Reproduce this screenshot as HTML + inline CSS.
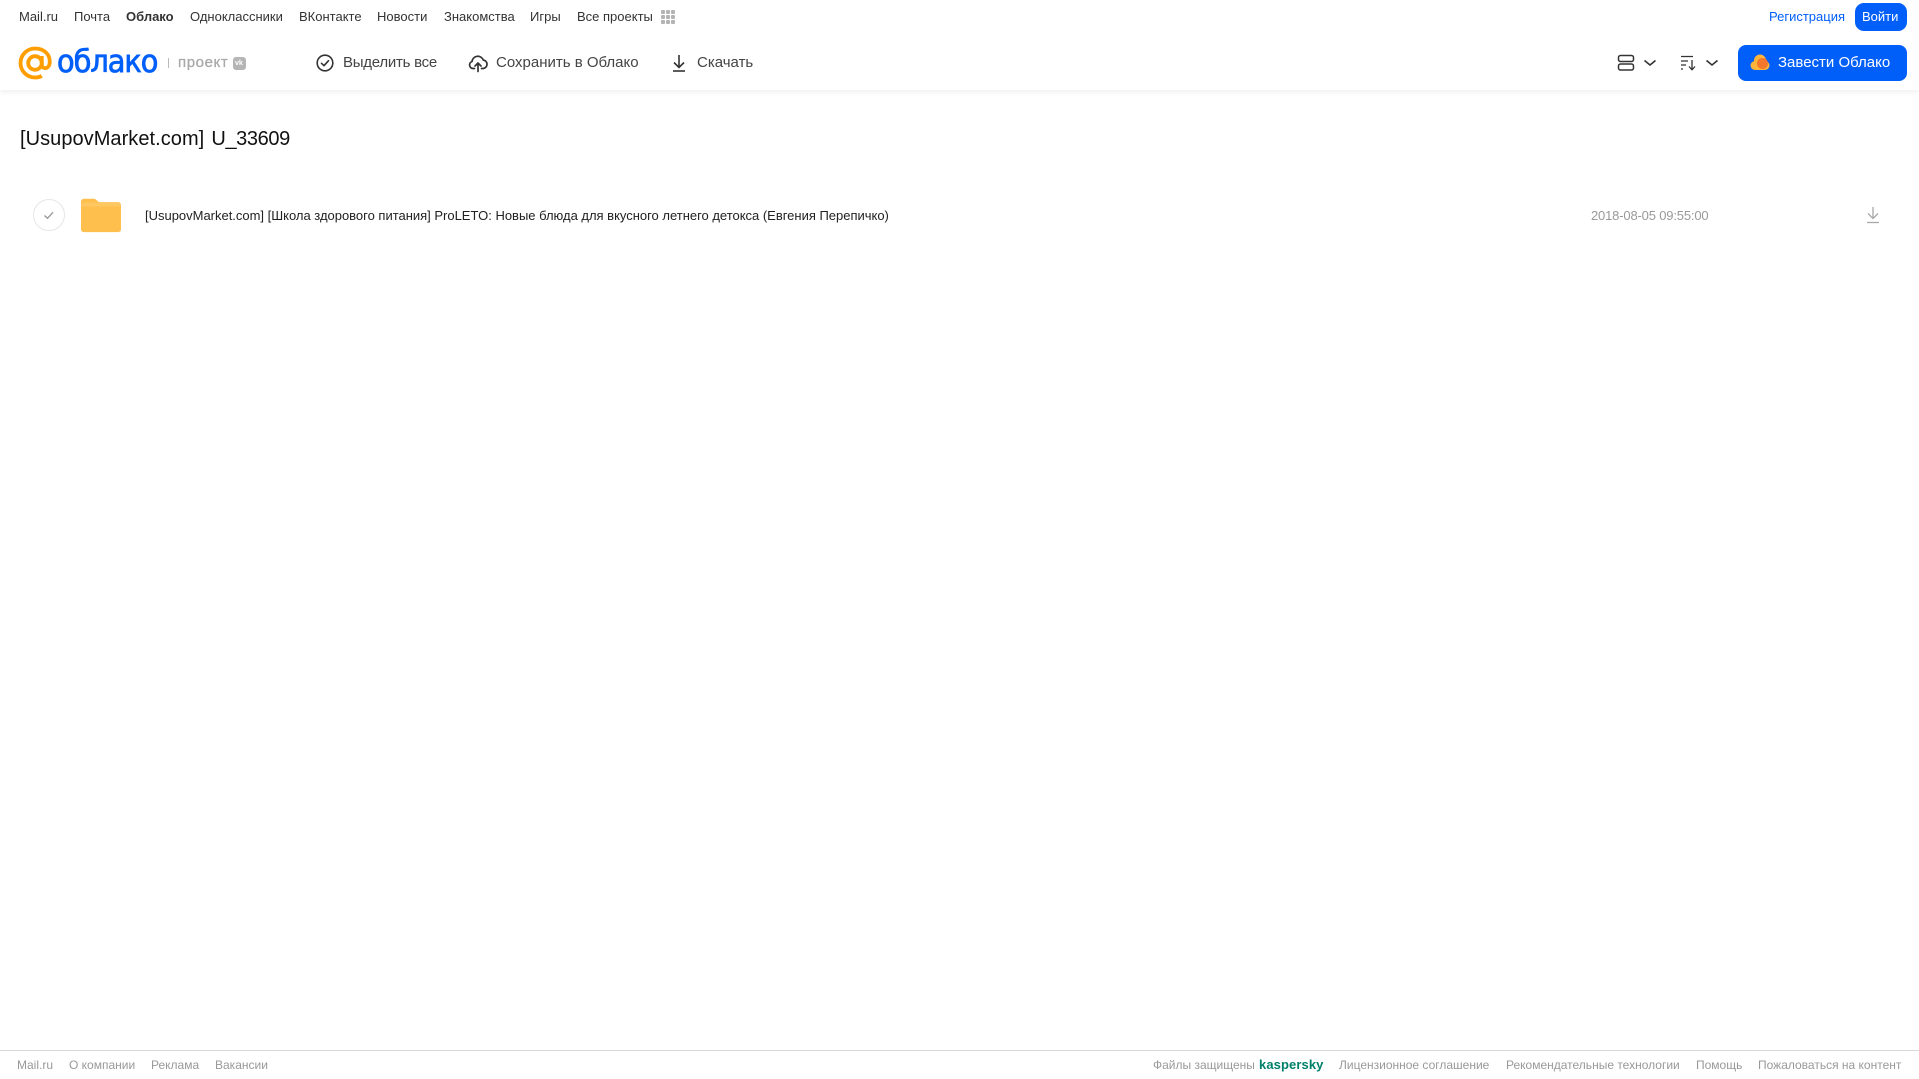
<!DOCTYPE html>
<html lang="ru">
<head>
<meta charset="utf-8">
<title>Облако</title>
<style>
html,body{margin:0;padding:0;background:#fff}
body{width:1919px;height:1079px;position:relative;overflow:hidden;font-family:"Liberation Sans","Noto Sans CJK SC",sans-serif;color:#333}
.t{position:absolute;white-space:nowrap;line-height:20px}
.n{top:7px;font-size:13px;color:#333}
.a{top:53px;font-size:15px;color:#444}
.f{top:1055px;font-size:12px;color:#999}
svg{position:absolute;display:block}
#hdr{position:absolute;left:0;top:0;width:1919px;height:90px;background:#fff;box-shadow:0 2px 6px rgba(0,0,0,.07)}
.btn{position:absolute;background:#005ff9;border-radius:7px}
</style>
</head>
<body>
<div id="hdr"></div>

<span class="t n" style="left:19px">Mail.ru</span>
<span class="t n" style="left:74px">Почта</span>
<span class="t n" style="left:126px;font-weight:bold">Облако</span>
<span class="t n" style="left:190px">Одноклассники</span>
<span class="t n" style="left:299px">ВКонтакте</span>
<span class="t n" style="left:377px">Новости</span>
<span class="t n" style="left:444px">Знакомства</span>
<span class="t n" style="left:530px">Игры</span>
<span class="t n" style="left:577px">Все проекты</span>
<svg style="left:660px;top:9px" width="16" height="16" fill="#b4b4b4"><rect x="1" y="1" width="4" height="4" rx="1"/><rect x="6" y="1" width="4" height="4" rx="1"/><rect x="11" y="1" width="4" height="4" rx="1"/><rect x="1" y="6" width="4" height="4" rx="1"/><rect x="6" y="6" width="4" height="4" rx="1"/><rect x="11" y="6" width="4" height="4" rx="1"/><rect x="1" y="11" width="4" height="4" rx="1"/><rect x="6" y="11" width="4" height="4" rx="1"/><rect x="11" y="11" width="4" height="4" rx="1"/></svg>

<span class="t n" style="left:1769px;color:#005ff9">Регистрация</span>
<div class="btn" style="left:1855px;top:3px;width:52px;height:28px;border-radius:9px"></div>
<span class="t n" style="left:1862px;color:#fff">Войти</span>

<!-- logo -->
<svg style="left:18px;top:46px" width="34" height="34" viewBox="0 0 34 34" fill="none" stroke="#ff9e00" stroke-width="3.800"><circle cx="17" cy="17" r="6.800"/><path d="M23.800 10v8.500c0 5 6.700 5 7.700-.5C33 9 26.500 2.500 17 2.500 9 2.500 2.500 9 2.500 17S9 31.500 17 31.500c2.800 0 4.800-.5 6.800-1.500"/></svg>
<span class="t" style="left:57px;top:45px;font-size:31px;line-height:34px;color:#005ff9;font-family:'DejaVu Sans',sans-serif;letter-spacing:-1.100px;-webkit-text-stroke:.8px #005ff9;transform:scaleX(.93);transform-origin:left center">облако</span>
<div style="position:absolute;left:168px;top:58px;width:1px;height:10px;background:#bbb"></div>
<span class="t" style="left:178px;top:53px;font-size:15px;color:#a9a9a9;letter-spacing:.6px;-webkit-text-stroke:.3px #a9a9a9">проект</span>
<div style="position:absolute;left:233px;top:57px;width:13px;height:13px;background:#b5b5b5;border-radius:3px"></div>
<span class="t" style="left:235px;top:58px;font-size:7px;line-height:11px;font-weight:bold;color:#fff">vk</span>

<!-- actions -->
<svg style="left:315px;top:53px" width="20" height="20" viewBox="0 0 20 20" fill="none" stroke="#333" stroke-width="1.600"><circle cx="10" cy="10" r="7.800"/><path d="M6.500 10.300l2.500 2.400 4.500-5" stroke-linecap="round" stroke-linejoin="round"/></svg>
<span class="t a" style="left:343px;letter-spacing:-.25px">Выделить все</span>
<svg style="left:468px;top:53px" width="20" height="20" viewBox="0 0 20 20" fill="none" stroke="#333" stroke-width="1.700" stroke-linecap="round" stroke-linejoin="round"><path d="M6.500 15.500H5a3.600 3.600 0 0 1-1-7A5.800 5.800 0 0 1 15.200 7a4.300 4.300 0 0 1 .3 8.500h-2"/><path d="M10 18.500v-8M7 13l3-3 3 3"/></svg>
<span class="t a" style="left:496px">Сохранить в Облако</span>
<svg style="left:669px;top:53px" width="20" height="20" viewBox="0 0 20 20" fill="none" stroke="#333" stroke-width="1.600"><path d="M10 2v12M5 9.500l5 5 5-5"/><path d="M4 18h12"/></svg>
<span class="t a" style="left:697px">Скачать</span>

<!-- right controls -->
<svg style="left:1617px;top:54px" width="18" height="18" viewBox="0 0 18 18" fill="none" stroke="#333" stroke-width="1.500"><rect x="1.500" y="1.500" width="15" height="6" rx="2"/><rect x="1.500" y="10" width="15" height="6" rx="2"/></svg>
<svg style="left:1643px;top:58px" width="14" height="10" viewBox="0 0 14 10" fill="none" stroke="#333" stroke-width="1.600"><path d="M1.500 2.500L7 7l5.500-4.500"/></svg>
<svg style="left:1680px;top:54px" width="18" height="18" viewBox="0 0 18 18" fill="none" stroke="#333" stroke-width="1.300"><path d="M1 2.500h12M1 7h7M1 11h5M1 15h2"/><path d="M12 6v10M9 12.500l3 3.300 3-3.300"/></svg>
<svg style="left:1705px;top:58px" width="14" height="10" viewBox="0 0 14 10" fill="none" stroke="#333" stroke-width="1.600"><path d="M1.500 2.500L7 7l5.500-4.500"/></svg>

<div class="btn" style="left:1738px;top:45px;width:169px;height:36px;border-radius:8px"></div>
<svg style="left:1750px;top:54px" width="20" height="18" viewBox="0 0 20 18"><g fill="#ffb43a"><circle cx="5" cy="11.500" r="4.500"/><circle cx="10" cy="6.500" r="6"/><circle cx="15" cy="11.500" r="4.500"/><rect x="5" y="10" width="10" height="6"/></g><circle cx="12.500" cy="9.500" r="5.500" fill="#f5772c"/></svg>
<span class="t a" style="left:1778px;color:#fff">Завести Облако</span>

<!-- title -->
<span class="t" style="left:20px;top:127px;font-size:20px;line-height:24px;color:#111;letter-spacing:.05px;word-spacing:1.500px">[UsupovMarket.com] <span style="letter-spacing:-.4px">U_33609</span></span>

<!-- row -->
<svg style="left:32px;top:198px" width="34" height="34" viewBox="0 0 34 34" fill="none"><circle cx="17" cy="17" r="15.500" stroke="#e6e6e6"/><path d="M12.500 17.500l3 2.800 5.500-6" stroke="#999" stroke-width="1.400"/></svg>
<svg style="left:81px;top:197px" width="40" height="36" viewBox="0 0 42 36"><path fill="#ffbf4d" d="M3 1h10c2 0 3 1 4 2l2 1.500h20a3 3 0 0 1 3 3V33a3 3 0 0 1-3 3H3a3 3 0 0 1-3-3V4a3 3 0 0 1 3-3z"/><path fill="#ffcb6b" d="M0 8a3 3 0 0 1 3-3h36a3 3 0 0 1 3 3v1H0z" opacity=".7"/></svg>
<span class="t" style="left:145px;top:206px;font-size:13px;color:#222;letter-spacing:-.01px">[UsupovMarket.com] [Школа здорового питания] ProLETO: Новые блюда для вкусного летнего детокса (Евгения Перепичко)</span>
<span class="t" style="left:1591px;top:206px;font-size:13px;color:#999;letter-spacing:-.17px">2018-08-05 09:55:00</span>
<svg style="left:1864px;top:206px" width="18" height="18" viewBox="0 0 18 18" fill="none" stroke="#a8a8a8" stroke-width="1.300"><path d="M9 1v11M4 7.500l5 5 5-5"/><path d="M3 16.500h12"/></svg>

<!-- footer -->
<div style="position:absolute;left:0;top:1050px;width:1919px;height:1px;background:#d9d9d9"></div>
<span class="t f" style="left:17px">Mail.ru</span>
<span class="t f" style="left:69px">О компании</span>
<span class="t f" style="left:151px">Реклама</span>
<span class="t f" style="left:215px">Вакансии</span>
<span class="t f" style="left:1153px">Файлы защищены</span>
<span class="t f" style="left:1259px;font-size:13px;font-weight:bold;color:#00806a;letter-spacing:.1px">kaspersky</span>
<span class="t f" style="left:1339px">Лицензионное соглашение</span>
<span class="t f" style="left:1506px">Рекомендательные технологии</span>
<span class="t f" style="left:1696px">Помощь</span>
<span class="t f" style="left:1758px">Пожаловаться на контент</span>
</body>
</html>
